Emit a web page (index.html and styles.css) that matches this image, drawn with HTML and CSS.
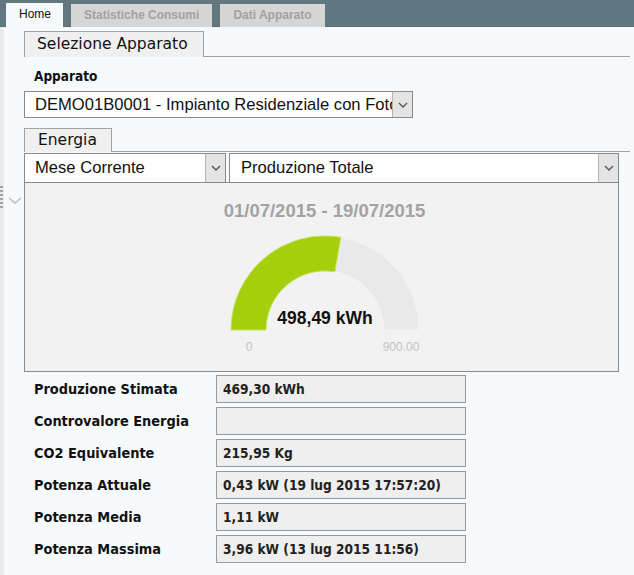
FILE: index.html
```html
<!DOCTYPE html>
<html>
<head>
<meta charset="utf-8">
<link rel="stylesheet" href="styles.css">
</head>
<body>
<div class="topbar">
  <div class="tab active">Home</div>
  <div class="tab">Statistiche Consumi</div>
  <div class="tab">Dati Apparato</div>
</div>
<div class="main">
  <div class="strip">
    <div class="grip"></div>
    <svg class="collapse" width="14" height="8" viewBox="0 0 14 8"><path d="M1 1 L7 6 L13 1" fill="none" stroke="#b8bec2" stroke-width="1.6"/></svg>
  </div>
  <div class="content">
    <div class="section-head"><span class="section-title">Selezione Apparato</span></div>
    <div class="field-label">Apparato</div>
    <div class="select wide">
      <span class="select-text">DEMO01B0001 - Impianto Residenziale con Fotovoltaico</span>
      <span class="select-btn"><svg width="10" height="6" viewBox="0 0 10 6"><path d="M1 1 L5 5 L9 1" fill="none" stroke="#555" stroke-width="1.4"/></svg></span>
    </div>
    <div class="section-head energy"><span class="section-title">Energia</span></div>
    <div class="select-row">
      <div class="select period">
        <span class="select-text">Mese Corrente</span>
        <span class="select-btn"><svg width="10" height="6" viewBox="0 0 10 6"><path d="M1 1 L5 5 L9 1" fill="none" stroke="#555" stroke-width="1.4"/></svg></span>
      </div>
      <div class="select kind">
        <span class="select-text">Produzione Totale</span>
        <span class="select-btn"><svg width="10" height="6" viewBox="0 0 10 6"><path d="M1 1 L5 5 L9 1" fill="none" stroke="#555" stroke-width="1.4"/></svg></span>
      </div>
    </div>
    <div class="chart">
      <div class="chart-title">01/07/2015 - 19/07/2015</div>
      <svg class="gauge" width="210" height="126" viewBox="0 0 210 126">
        <path d="M120.8 8.3 A94 94 0 0 1 199 101 L164 101 A59 59 0 0 0 114.9 42.8 Z" fill="#e9e9e9" stroke="#f4f4f4" stroke-width="1"/>
        <path d="M11 101 A94 94 0 0 1 120.8 8.3 L114.9 42.8 A59 59 0 0 0 46 101 Z" fill="#a3cf0d" stroke="#c6e35a" stroke-width="1"/>
        <text x="105" y="95" text-anchor="middle" class="gauge-value">498,49 kWh</text>
        <text x="29" y="122" text-anchor="middle" class="gauge-axis">0</text>
        <text x="181" y="122" text-anchor="middle" class="gauge-axis">900.00</text>
      </svg>
    </div>
    <div class="rows">
      <div class="row"><span class="row-label">Produzione Stimata</span><span class="row-value">469,30 kWh</span></div>
      <div class="row"><span class="row-label">Controvalore Energia</span><span class="row-value"></span></div>
      <div class="row"><span class="row-label">CO2 Equivalente</span><span class="row-value">215,95 Kg</span></div>
      <div class="row"><span class="row-label">Potenza Attuale</span><span class="row-value">0,43 kW (19 lug 2015 17:57:20)</span></div>
      <div class="row"><span class="row-label">Potenza Media</span><span class="row-value">1,11 kW</span></div>
      <div class="row"><span class="row-label">Potenza Massima</span><span class="row-value">3,96 kW (13 lug 2015 11:56)</span></div>
    </div>
  </div>
</div>
</body>
</html>
```

FILE: styles.css
```css
* { box-sizing: border-box; }
html, body { margin: 0; padding: 0; }
body {
  width: 634px;
  height: 575px;
  overflow: hidden;
  background: #f7fafd;
  font-family: "Liberation Sans", Arial, sans-serif;
  color: #111;
}
.topbar {
  height: 27px;
  background: #627880;
  border-bottom: 1px solid #5a6d73;
  display: flex;
  align-items: flex-end;
  padding-left: 6px;
  gap: 8px;
}
.tab {
  height: 23px;
  padding: 0 13px;
  background: #d6d6d6;
  color: #a2a2a2;
  font-size: 12px;
  font-weight: bold;
  line-height: 23px;
  margin-bottom: -1px;
}
.tab.active {
  background: #f7fafd;
  color: #111;
  font-weight: normal;
  height: 24px;
  padding: 0 12px 0 13px;
}
.main {
  display: flex;
  height: 548px;
}
.strip {
  width: 6px;
  background: #e7ebee;
  position: relative;
}
.grip {
  position: absolute;
  left: 0;
  top: 158px;
  width: 3px;
  height: 24px;
  background: radial-gradient(circle, #8c969b 1px, transparent 1.4px) 0 0 / 3px 4px;
}
.collapse {
  position: absolute;
  left: 8px;
  top: 170px;
}
.content {
  flex: 1;
  padding: 4px 4px 0 20px;
}
.section-head {
  border-bottom: 1px solid #a2a2a2;
  height: 26px;
}
.section-title {
  display: inline-block;
  height: 26px;
  border: 1px solid #a2a2a2;
  border-bottom: none;
  background: #f0f0f0;
  padding: 0 13px 0 12px;
  font-family: "DejaVu Sans", sans-serif;
  font-size: 15.5px;
  line-height: 25px;
  color: #111;
  width: 180px;
}
.field-label {
  margin: 11px 0 0 10px;
  height: 23px;
  font-family: "DejaVu Sans Condensed", "DejaVu Sans", sans-serif;
  font-weight: bold;
  font-size: 13.5px;
  line-height: 17px;
}
.select {
  display: flex;
  height: 27px;
  background: #fff;
  border: 1px solid #8a8a8a;
  overflow: hidden;
}
.select.wide { width: 389px; }
.select-text {
  flex: 1;
  padding-left: 10px;
  font-size: 16.6px;
  line-height: 25px;
  white-space: nowrap;
  overflow: hidden;
  color: #111;
}
.select-btn {
  width: 20px;
  background: #e4e4e4;
  border-left: 1px solid #b4b4b4;
  display: flex;
  align-items: center;
  justify-content: center;
}
.section-head.energy {
  margin-top: 10px;
  width: 606px;
  height: 24px;
}
.section-head.energy .section-title {
  height: 24px;
  line-height: 23px;
  padding: 0 12px 0 13px;
  width: 88px;
}
.select-row {
  display: flex;
  gap: 3px;
  margin-top: 1px;
}
.select.period { width: 202px; height: 30px; }
.select.kind { width: 390px; height: 30px; }
.select.period .select-text, .select.kind .select-text { line-height: 28px; }
.select.kind .select-text { padding-left: 11px; }
.chart {
  width: 595px;
  height: 190px;
  margin-top: -1px;
  background: #f2f2f2;
  border: 1px solid #8a8a8a;
  display: flex;
  flex-direction: column;
  align-items: center;
}
.chart-title {
  margin-top: 17px;
  margin-left: 6px;
  font-size: 18.5px;
  font-weight: bold;
  color: #a3a3a3;
  line-height: 21px;
}
.gauge {
  margin-top: 8px;
  margin-left: 7px;
}
.gauge-value {
  font-family: "Liberation Sans", Arial, sans-serif;
  font-size: 17.5px;
  font-weight: bold;
  fill: #111;
}
.gauge-axis {
  font-family: "Liberation Sans", Arial, sans-serif;
  font-size: 12px;
  fill: #c2c2c2;
}
.rows {
  display: flex;
  flex-direction: column;
  gap: 4px;
  margin-top: 3px;
}
.row {
  display: flex;
  align-items: center;
  height: 28px;
}
.row-label {
  width: 192px;
  padding-left: 10px;
  font-family: "DejaVu Sans Condensed", "DejaVu Sans", sans-serif;
  font-weight: bold;
  font-size: 14.4px;
  color: #111;
}
.row-value {
  width: 250px;
  height: 28px;
  background: #efefef;
  border: 1px solid #9a9a9a;
  padding-left: 6px;
  font-family: "DejaVu Sans Condensed", "DejaVu Sans", sans-serif;
  font-size: 13.6px;
  font-weight: bold;
  line-height: 26px;
  color: #222;
  white-space: nowrap;
}
```
